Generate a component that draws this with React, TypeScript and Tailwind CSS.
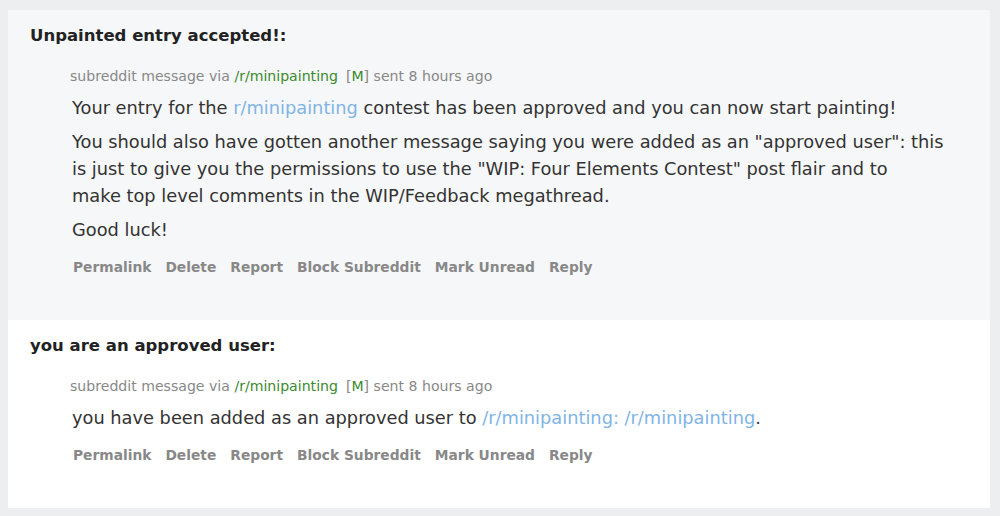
import React from "react";

const actions = ["Permalink", "Delete", "Report", "Block Subreddit", "Mark Unread", "Reply"];

function Meta() {
  return (
    <div className="ml-[40px] text-[14.1px] leading-[20px] text-[#888888]">
      subreddit message via <span className="text-[#3a8a2e]">/r/minipainting</span>
      <span className="ml-[8px]">
        [<span className="text-[#3a8a2e]">M</span>]
      </span>{" "}
      sent 8 hours ago
    </div>
  );
}

function Actions({ top }: { top: string }) {
  return (
    <div className={`ml-[43px] ${top} flex gap-[14px] text-[13.8px] font-bold leading-[20px] text-[#888888]`}>
      {actions.map((a) => (
        <span key={a}>{a}</span>
      ))}
    </div>
  );
}

export default function App() {
  return (
    <div
      className="min-h-[516px] bg-[#edeef0] pl-[8px] pr-[10px] pt-[10px] pb-[9px]"
      style={{ fontFamily: '"DejaVu Sans", Verdana, sans-serif' }}
    >
      <div className="bg-[#f6f7f8] pl-[22px] pr-[20px] pt-[15px] pb-[43px]">
        <h2 className="text-[16.5px] font-bold leading-[22px] text-[#222222]">
          Unpainted entry accepted!:
        </h2>
        <div className="mt-[19px]">
          <Meta />
          <div className="ml-[42px] mt-[8px] text-[17.8px] leading-[27px] text-[#333333]">
            <p>
              Your entry for the <span className="text-[#80b4e6]">r/minipainting</span> contest has been
              approved and you can now start painting!
            </p>
            <p className="mt-[7px]">
              You should also have gotten another message saying you were added as an "approved
              user": this
              <br />
              is just to give you the permissions to use the "WIP: Four Elements Contest" post flair
              and to
              <br />
              make top level comments in the WIP/Feedback megathread.
            </p>
            <p className="mt-[7px]">Good luck!</p>
          </div>
          <Actions top="mt-[14px]" />
        </div>
      </div>
      <div className="bg-white pl-[22px] pr-[20px] pt-[15px] pb-[43px]">
        <h2 className="text-[16.5px] font-bold leading-[22px] text-[#222222]">
          you are an approved user:
        </h2>
        <div className="mt-[19px]">
          <Meta />
          <div className="ml-[42px] mt-[8px] text-[17.8px] leading-[27px] text-[#333333]">
            <p>
              you have been added as an approved user to{" "}
              <span className="text-[#80b4e6]">/r/minipainting: /r/minipainting</span>.
            </p>
          </div>
          <Actions top="mt-[14px]" />
        </div>
      </div>
    </div>
  );
}
